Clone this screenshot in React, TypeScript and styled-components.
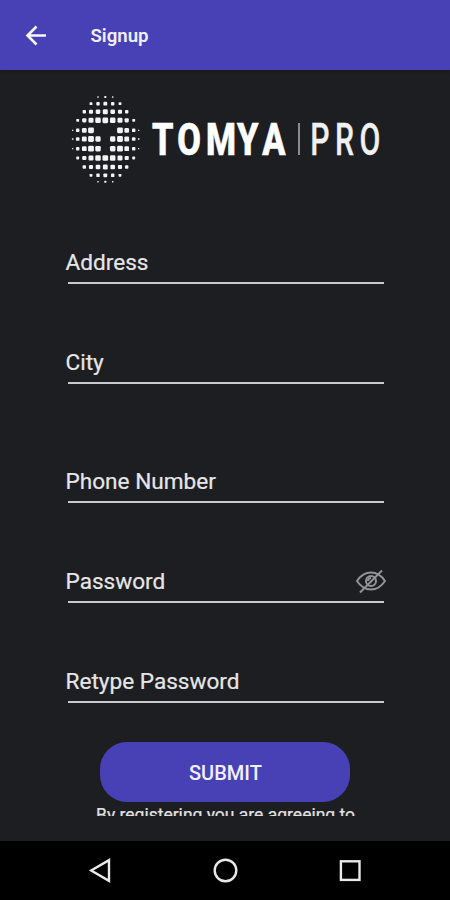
import React from 'react';
import styled, { createGlobalStyle } from 'styled-components';

const GlobalStyle = createGlobalStyle`
  * { box-sizing: border-box; }
  body { margin: 0; background: #1d1e22; font-family: Roboto, "Liberation Sans", sans-serif; }
`;

const Screen = styled.div`
  width: 450px;
  height: 900px;
  display: flex;
  flex-direction: column;
  background: #1d1e22;
  overflow: hidden;
`;

const AppBar = styled.header`
  flex: none;
  height: 70px;
  display: flex;
  align-items: center;
  gap: 42.5px;
  padding: 1px 24px 0;
  background: #4841b5;
  box-shadow: 0 1px 2px #17181a;
`;

const BackButton = styled.button`
  display: flex;
  width: 24px;
  height: 24px;
  padding: 0;
  border: 0;
  background: none;
`;

const Title = styled.h1`
  margin: 0;
  color: #f0efff;
  font-size: 18.6px;
  line-height: 24px;
  font-weight: 600;
`;

const Content = styled.main`
  flex: 1;
  display: flex;
  flex-direction: column;
  padding: 20px 65px 0;
`;

const Logo = styled.svg`
  display: block;
  flex: none;
  width: 320px;
  height: 100px;
`;

const Form = styled.form`
  display: flex;
  flex-direction: column;
`;

const Field = styled.label<{ $gap: number }>`
  display: flex;
  align-items: flex-end;
  justify-content: space-between;
  height: 44px;
  margin: ${({ $gap }) => $gap}px 1px 0 2.5px;
  padding-bottom: 5px;
  border-bottom: 2px solid #c8c9ca;
`;

const FieldName = styled.span<{ $width: number }>`
  width: ${({ $width }) => $width}px;
  margin-left: -2px;
  white-space: nowrap;
  color: #e6e6e7;
  font-size: 22.6px;
  line-height: 28px;
  -webkit-text-stroke: 0.2px #e6e6e7;
`;

const EyeIcon = styled.svg`
  width: 32px;
  height: 26px;
  margin: 0 -2.5px 1px 0;
`;

const SubmitButton = styled.button`
  width: 250px;
  height: 60px;
  margin: 39px 0 0 35.4px;
  padding: 2px 0 0;
  border: 0;
  border-radius: 27px;
  background: #4841b5;
  color: #f1f0ff;
  font: 500 20px/24px Roboto, sans-serif;
`;

const Terms = styled.p`
  height: 13px;
  margin: 1px 0 0 31px;
  padding-top: 2px;
  overflow: hidden;
  white-space: nowrap;
  color: #e2e2e3;
  font-size: 17.5px;
  line-height: 21px;
  -webkit-text-stroke: 0.2px #e2e2e3;
`;

const NavBar = styled.nav`
  flex: none;
  height: 59px;
  display: flex;
  align-items: center;
  justify-content: space-between;
  padding: 0 86px 2px 86px;
  background: #000;
`;

const NavIcon = styled.svg`
  width: 28px;
  height: 28px;
  fill: none;
  stroke: #e9e9e9;
  stroke-width: 2.4;
`;

const dotColumns = [7.7, 12.7, 19.3, 26, 33, 40.3, 47.7, 55, 61.7, 68.7, 73.7];
const dotRows = [7, 13.7, 21.7, 30.3, 40.3, 49, 58.7, 68, 77, 85.3, 91.7];
const dotSizes = [
  [0, 0, 0, 0, 1.5, 2, 1.5, 0, 0, 0, 0],
  [0, 0, 0, 2.8, 3.4, 3.8, 3.4, 2.8, 0, 0, 0],
  [0, 0, 3.4, 4.1, 4.6, 5, 4.6, 4.1, 3.4, 0, 0],
  [0, 2.8, 4.2, 5, 5.5, 5.7, 5.5, 5, 4.2, 2.8, 0],
  [1.3, 3.4, 4.7, 5.8, 0, 0, 0, 5.8, 4.7, 3.4, 1.3],
  [1.6, 3.5, 4.8, 5.8, 5.3, 0, 5.3, 5.8, 4.8, 3.5, 1.6],
  [1.3, 3.4, 4.7, 5.8, 5.5, 0, 5.5, 5.8, 4.7, 3.4, 1.3],
  [0, 2.8, 4.2, 5, 5.5, 5.7, 5.5, 5, 4.2, 2.8, 0],
  [0, 0, 3.4, 4.1, 4.6, 4.8, 4.6, 4.1, 3.4, 0, 0],
  [0, 0, 0, 2.8, 3.4, 3.8, 3.4, 2.8, 0, 0, 0],
  [0, 0, 0, 0, 1.5, 2, 1.5, 0, 0, 0, 0],
];

function BrandLogo() {
  return (
    <Logo viewBox="0 0 320 100" aria-label="Tomya Pro">
      <g fill="#f4f4f4">
        {dotSizes.flatMap((row, r) =>
          row.map((size, c) =>
            size > 0 ? (
              <rect
                key={`${r}-${c}`}
                x={dotColumns[c] - size / 2}
                y={dotRows[r] - size / 2}
                width={size}
                height={size}
                rx={size * 0.25}
              />
            ) : null,
          ),
        )}
      </g>
      <g fontFamily="Roboto, sans-serif" fontSize="44.5">
        <text
          transform="translate(0 64.7) scale(0.77 1)"
          x="113 145.8 183.1 223.4 256.1"
          fontWeight="800"
          fill="#fff"
          stroke="#fff"
          strokeWidth="0.7"
        >
          TOMYA
        </text>
        <text
          transform="translate(0 64.7) scale(0.68 1)"
          x="360.5 397 433"
          fontWeight="500"
          fill="#f0f0f0"
          stroke="#f0f0f0"
          strokeWidth="0.3"
        >
          PRO
        </text>
      </g>
      <rect x="233" y="33" width="2" height="32" fill="#8b8c8e" />
    </Logo>
  );
}

const fields = [
  { name: 'Address', gap: 50, width: 100 },
  { name: 'City', gap: 56, width: 100 },
  { name: 'Phone Number', gap: 75, width: 180 },
  { name: 'Password', gap: 56, width: 140, hidden: true },
  { name: 'Retype Password', gap: 56, width: 200 },
];

export default function App() {
  return (
    <>
      <GlobalStyle />
      <Screen>
        <AppBar>
          <BackButton aria-label="Back">
            <svg width="24" height="24" viewBox="0 0 24 24" fill="none" stroke="#f5f4ff" strokeWidth="2.6">
              <path d="M22 11.5H4M12.5 2.5 3.5 11.5 12.5 20.5" />
            </svg>
          </BackButton>
          <Title>Signup</Title>
        </AppBar>
        <Content>
          <BrandLogo />
          <Form>
            {fields.map((field) => (
              <Field key={field.name} $gap={field.gap}>
                <FieldName $width={field.width}>{field.name}</FieldName>
                {field.hidden && (
                  <EyeIcon viewBox="0 0 32 26" fill="none" stroke="#929394" strokeWidth="2">
                    <path d="M2 12C6 6 11 3.5 16 3.5S26 6 30 12C26 18 21 20.5 16 20.5S6 18 2 12Z" />
                    <circle cx="16" cy="12" r="5" />
                    <path d="M16 9a3 3 0 0 0-3 3M5 23.5 27 1.5" />
                  </EyeIcon>
                )}
              </Field>
            ))}
            <SubmitButton type="button">SUBMIT</SubmitButton>
            <Terms>By registering you are agreeing to</Terms>
          </Form>
        </Content>
        <NavBar>
          <NavIcon viewBox="0 0 28 28">
            <path d="M23 4.2v20.6L5.2 14.5Z" />
          </NavIcon>
          <NavIcon viewBox="0 0 28 28">
            <circle cx="14.5" cy="14.5" r="10.8" />
          </NavIcon>
          <NavIcon viewBox="0 0 28 28">
            <rect x="4.9" y="5.3" width="18.6" height="18.6" />
          </NavIcon>
        </NavBar>
      </Screen>
    </>
  );
}
